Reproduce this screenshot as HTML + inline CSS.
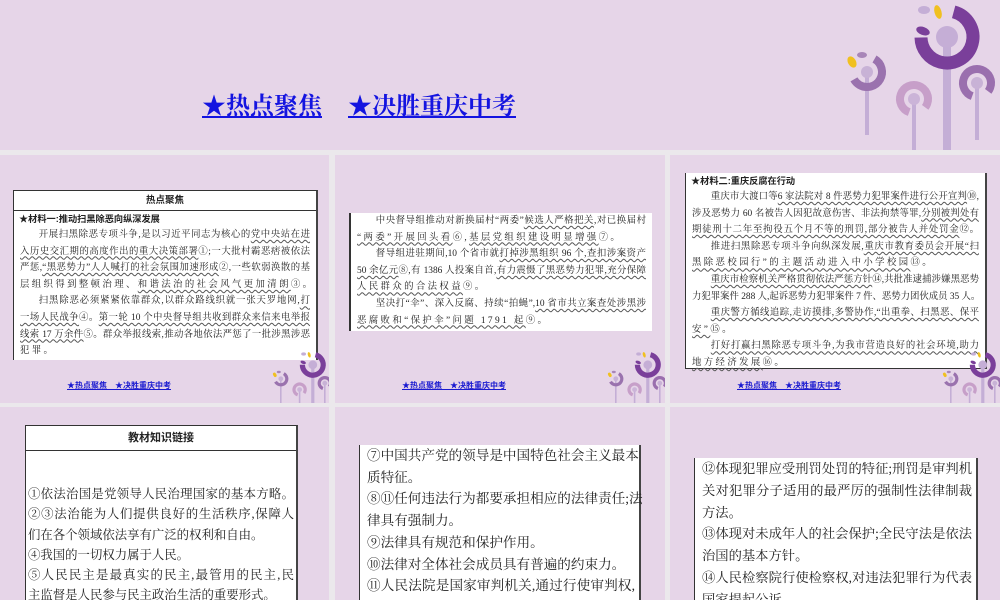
<!DOCTYPE html>
<html><head><meta charset="utf-8">
<style>
*{margin:0;padding:0;box-sizing:border-box}
body{width:1000px;height:600px;overflow:hidden;background:#ebe8ec;position:relative;font-family:"Liberation Serif","Noto Serif CJK SC",serif;color:#222}
.p{position:absolute;background:#e6d5e8;overflow:hidden}
.box{position:absolute;background:#fff;border:1px solid #333;border-right:2px solid #444}
.ln{white-space:nowrap;text-align:justify;text-align-last:justify;display:block}
.nl{white-space:nowrap;display:block;letter-spacing:2.4px}
.s{font-size:9.4px;line-height:16.6px;padding:0 6px}
.ind{text-indent:2em}
.u{text-decoration:underline wavy #555;text-decoration-thickness:0.5px;text-underline-offset:2px}
.hd{font-family:"Liberation Sans","Noto Sans CJK SC",sans-serif;font-weight:bold}
.foot{position:absolute;left:67px;top:225px;font-family:"Liberation Sans","Noto Sans CJK SC",sans-serif;font-size:8px;font-weight:bold;color:#1a1ad0;text-decoration:underline;white-space:nowrap}
.mini{position:absolute;left:0;top:0}
</style></head><body>
<svg width="0" height="0" style="position:absolute">
<defs>
<g id="fl">
<line x1="287" y1="37" x2="287" y2="160" stroke="#c4aed6" stroke-width="8"/>
<circle cx="287" cy="37" r="26" fill="none" stroke="#7a3f9a" stroke-width="13" stroke-dasharray="115 48" transform="rotate(-75 287 37)"/>
<circle cx="287" cy="37" r="11" fill="#c5aed6"/>
<ellipse cx="263" cy="31" rx="7" ry="4" fill="#7a3f9a" transform="rotate(20 263 31)"/>
<ellipse cx="264" cy="10" rx="6" ry="4" fill="#c4aed6"/>
<ellipse cx="278" cy="12" rx="3.5" ry="7" fill="#f0c020" transform="rotate(-15 278 12)"/>
<line x1="317" y1="83" x2="317" y2="140" stroke="#c4aed6" stroke-width="4"/>
<circle cx="317" cy="83" r="14" fill="none" stroke="#9a6fae" stroke-width="8" stroke-dasharray="70 18" transform="rotate(110 317 83)"/>
<circle cx="317" cy="83" r="6" fill="#c8b2d6"/>
<line x1="254" y1="99" x2="254" y2="160" stroke="#c4aed6" stroke-width="4"/>
<circle cx="254" cy="99" r="14" fill="none" stroke="#c79fc9" stroke-width="8" stroke-dasharray="70 18" transform="rotate(110 254 99)"/>
<circle cx="254" cy="99" r="6" fill="#cbb4d8"/>
<line x1="207" y1="72" x2="207" y2="135" stroke="#c4aed6" stroke-width="4"/>
<circle cx="207" cy="72" r="15" fill="none" stroke="#9a72ae" stroke-width="8" stroke-dasharray="55 40" transform="rotate(-60 207 72)"/>
<circle cx="207" cy="72" r="6" fill="#c8b2d6"/>
<ellipse cx="192" cy="62" rx="4" ry="6" fill="#f0c020" transform="rotate(-30 192 62)"/>
<ellipse cx="202" cy="55" rx="5" ry="3" fill="#a886b8"/>
</g>
</defs></svg>

<!-- top banner -->
<div class="p" style="left:0;top:0;width:1000px;height:150px">
<div style="position:absolute;left:202px;top:86px;font-family:'Liberation Serif','Noto Serif CJK SC',serif;font-weight:bold;font-size:24px;color:#1414e0;text-decoration:underline;white-space:nowrap">★热点聚焦<span style="display:inline-block;width:26px"></span>★决胜重庆中考</div>
<svg style="position:absolute;left:660px;top:0" width="340" height="150"><use href="#fl"/></svg>
</div>

<!-- row1 panel1 -->
<div class="p" style="left:0;top:155px;width:329px;height:248px">
<div class="box" style="left:13px;top:35px;width:305px;height:170px;border-bottom:none">
<div class="hd" style="height:20px;border-bottom:1px solid #333;text-align:center;font-size:9.5px;line-height:20px">热点聚焦</div>
<div class="hd" style="font-size:9.2px;line-height:16px;padding:0 5px">★材料一:推动扫黑除恶向纵深发展</div>
<div class="s">
<span class="ln ind">开展扫黑除恶专项斗争,是以习近平同志为核心的<span class="u">党中央站在进</span></span>
<span class="ln"><span class="u">入历史交汇期的高度作出的重大决策部署</span>①;一大批村霸恶痞被依法</span>
<span class="ln">严惩,<span class="u">“黑恶势力”人人喊打的社会氛围加速形成</span>②,一些软弱涣散的基</span>
<span class="nl">层组织得到整顿治理、<span class="u">和谐法治的社会风气更加清朗</span>③。</span>
<span class="ln ind">扫黑除恶必须紧紧依靠群众,以群众路线织就一张天罗地网,<span class="u">打</span></span>
<span class="ln"><span class="u">一场人民战争</span>④。<span class="u">第一轮 10 个中央督导组共收到群众来信来电举报</span></span>
<span class="ln"><span class="u">线索 17 万余件</span>⑤。群众举报线索,推动各地依法严惩了一批涉黑涉恶</span>
<span class="nl">犯罪。</span>
</div></div>
<div class="foot">★热点聚焦　★决胜重庆中考</div>
<svg class="mini" width="329" height="248"><g transform="translate(198 195) scale(0.4)"><use href="#fl"/></g></svg>
</div>

<!-- row1 panel2 -->
<div class="p" style="left:335px;top:155px;width:330px;height:248px">
<div class="box" style="left:14px;top:58px;width:303px;height:118px;border-left:2px solid #333;border-top:none;border-right:none;border-bottom:none">
<div class="s">
<span class="ln ind">中央督导组推动对新换届村“两委”<span class="u">候选人严格把关</span>,对已换届村</span>
<span class="nl"><span class="u">“两委”开展回头看</span>⑥,<span class="u">基层党组织建设明显增强</span>⑦。</span>
<span class="ln ind">督导组进驻期间,10 个省市就<span class="u">打掉涉黑组织 96 个,查扣涉案资产</span></span>
<span class="ln"><span class="u">50 余亿元</span>⑧,有 1386 人投案自首,<span class="u">有力震慑了黑恶势力犯罪,充分保障</span></span>
<span class="nl"><span class="u">人民群众的合法权益</span>⑨。</span>
<span class="ln ind">坚决打“伞”、深入反腐、持续“拍蝇”,<span class="u">10 省市共立案查处涉黑涉</span></span>
<span class="nl"><span class="u">恶腐败和“保护伞”问题 1791 起</span>⑨。</span>
</div></div>
<div class="foot">★热点聚焦　★决胜重庆中考</div>
<svg class="mini" width="330" height="248"><g transform="translate(198 195) scale(0.4)"><use href="#fl"/></g></svg>
</div>

<!-- row1 panel3 -->
<div class="p" style="left:670px;top:155px;width:330px;height:248px">
<div class="box" style="left:15px;top:18px;width:302px;height:196px;border-top:none">
<div class="hd" style="font-size:9.2px;line-height:16px;padding:0 5px">★材料二:重庆反腐在行动</div>
<div class="s">
<span class="ln ind">重庆市大渡口等<span class="u">6 家法院对 8 件恶势力犯罪案件进行公开宣判</span>⑩,</span>
<span class="ln">涉及恶势力 60 名被告人因犯故意伤害、非法拘禁等罪,<span class="u">分别被判处有</span></span>
<span class="ln"><span class="u">期徒刑十二年至拘役五个月不等的刑罚,部分被告人并处罚金</span>⑫。</span>
<span class="ln ind">推进扫黑除恶专项斗争向纵深发展,<span class="u">重庆市教育委员会开展“扫</span></span>
<span class="nl"><span class="u">黑除恶校园行”的主题活动进入中小学校园</span>⑬。</span>
<span class="ln ind"><span class="u">重庆市检察机关严格贯彻依法严惩方针</span>⑭,共批准逮捕涉嫌黑恶势</span>
<span class="ln">力犯罪案件 288 人,起诉恶势力犯罪案件 7 件、恶势力团伙成员 35 人。</span>
<span class="ln ind"><span class="u">重庆警方循线追踪,走访摸排,多警协作,“出重拳、扫黑恶、保平</span></span>
<span class="nl"><span class="u">安”</span>⑮。</span>
<span class="ln ind"><span class="u">打好打赢扫黑除恶专项斗争,为我市营造良好的社会环境,助力</span></span>
<span class="nl"><span class="u">地方经济发展</span>⑯。</span>
</div></div>
<div class="foot">★热点聚焦　★决胜重庆中考</div>
<svg class="mini" width="330" height="248"><g transform="translate(198 195) scale(0.4)"><use href="#fl"/></g></svg>
</div>

<!-- row2 panel1 -->
<div class="p" style="left:0;top:407px;width:329px;height:193px">
<div class="box" style="left:25px;top:18px;width:273px;height:190px">
<div class="hd" style="height:25px;border-bottom:1px solid #333;text-align:center;font-size:11px;line-height:25px">教材知识链接</div>
<div style="font-size:12.4px;line-height:20.3px;padding:33px 2px 0 2px">
<span class="ln">①依法治国是党领导人民治理国家的基本方略。</span>
<span class="ln">②③法治能为人们提供良好的生活秩序,保障人</span>
<span style="display:block">们在各个领域依法享有广泛的权利和自由。</span>
<span style="display:block">④我国的一切权力属于人民。</span>
<span class="ln">⑤人民民主是最真实的民主,最管用的民主,民</span>
<span style="display:block">主监督是人民参与民主政治生活的重要形式。</span>
</div></div>
</div>

<!-- row2 panel2 -->
<div class="p" style="left:335px;top:407px;width:330px;height:193px">
<div class="box" style="left:24px;top:38px;width:282px;height:170px;border-top:none">
<div style="font-size:13.6px;line-height:21.7px;padding:0 4px 0 7px">
<span class="ln">⑦中国共产党的领导是中国特色社会主义最本</span>
<span style="display:block">质特征。</span>
<span class="ln">⑧⑪任何违法行为都要承担相应的法律责任;法</span>
<span style="display:block">律具有强制力。</span>
<span style="display:block">⑨法律具有规范和保护作用。</span>
<span style="display:block">⑩法律对全体社会成员具有普遍的约束力。</span>
<span class="ln">⑪人民法院是国家审判机关,通过行使审判权,</span>
<span style="display:block">行使审判作用。</span>
</div></div>
</div>

<!-- row2 panel3 -->
<div class="p" style="left:670px;top:407px;width:330px;height:193px">
<div class="box" style="left:24px;top:51px;width:284px;height:150px;border-top:none">
<div style="font-size:13.3px;line-height:21.8px;padding:0 4px 0 7px">
<span class="ln">⑫体现犯罪应受刑罚处罚的特征;刑罚是审判机</span>
<span class="ln">关对犯罪分子适用的最严厉的强制性法律制裁</span>
<span style="display:block">方法。</span>
<span class="ln">⑬体现对未成年人的社会保护;全民守法是依法</span>
<span style="display:block">治国的基本方针。</span>
<span class="ln">⑭人民检察院行使检察权,对违法犯罪行为代表</span>
<span style="display:block">国家提起公诉。</span>
</div></div>
</div>
</body></html>
